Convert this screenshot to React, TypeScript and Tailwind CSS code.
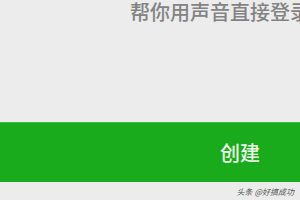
export default function App() {
  return (
    <div
      className="w-[300px] h-[200px] bg-[#ececec] overflow-hidden flex flex-col"
      style={{ fontFamily: '"Noto Sans CJK SC", "Noto Sans", sans-serif' }}
    >
      <div className="pl-[130px] pt-[2px] h-[122px] whitespace-nowrap text-[20px] leading-[20px] text-[#838383] font-medium">
        帮你用声音直接登录
      </div>
      <div className="h-[60px] bg-[#1aab1c] border-t border-[#3cbd3c] flex items-center justify-end pr-[40px]">
        <span className="text-[20px] leading-[20px] text-[#eaf7e8] font-medium">创建</span>
      </div>
      <div className="flex-1 flex items-center justify-end pr-[6px] pt-[1px]">
        <span className="text-[8px] leading-[8px] text-[#555555] italic">
          头条<span className="ml-[2px]">@好搞成功</span>
        </span>
      </div>
    </div>
  );
}
